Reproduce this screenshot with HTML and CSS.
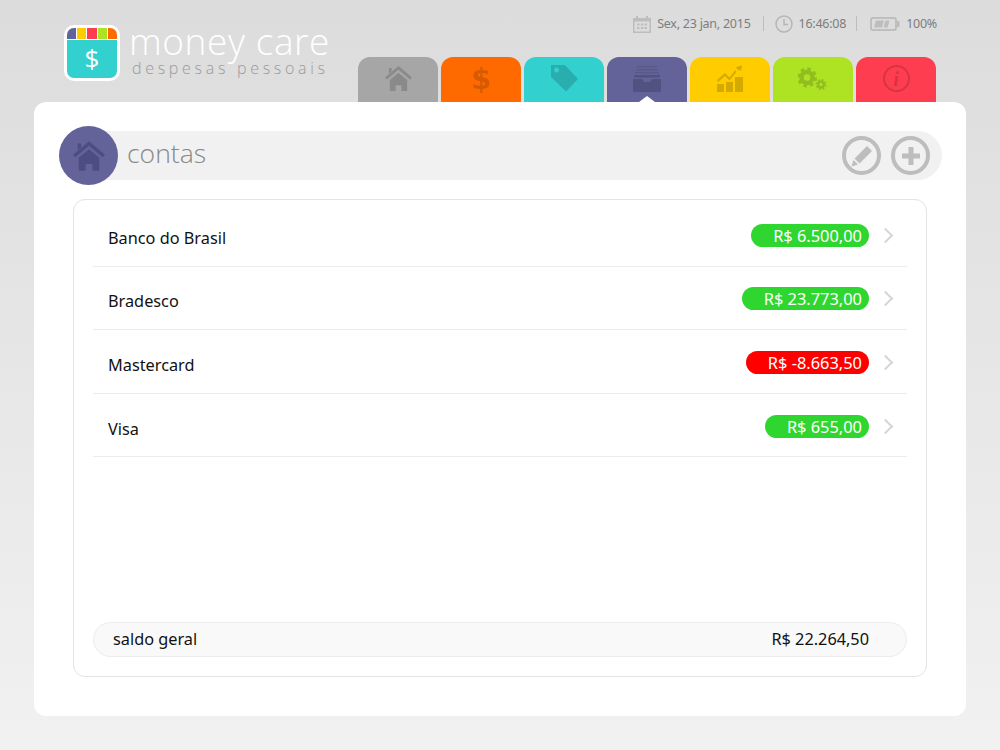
FILE: index.html
```html
<!DOCTYPE html>
<html lang="pt">
<head>
  <meta charset="utf-8">
  <title>money care</title>
  <link rel="stylesheet" href="styles.css">
</head>
<body>
  <header class="top">
    <div class="brand">
      <div class="app-icon">
        <div class="app-stripes">
          <span class="c-purple"></span><span class="c-yellow"></span><span class="c-red"></span><span class="c-green"></span><span class="c-orange"></span>
        </div>
        <div class="app-dollar">$</div>
      </div>
      <div class="brand-text">
        <div class="brand-name">money care</div>
        <div class="brand-sub">despesas pessoais</div>
      </div>
    </div>
    <div class="top-right">
      <div class="status">
        <svg class="st-icon" width="18" height="18" viewBox="0 0 18 18"><path fill="#bdbdbd" d="M0 3h3V1h2v2h8V1h2v2h3v15H0z"/><path fill="#dcdcdc" d="M1.500 6.500h15v10h-15z"/><path fill="#bdbdbd" d="M4 8.500h2.500v2H4zM7.800 8.500h2.500v2H7.800zM11.500 8.500H14v2h-2.500zM4 12h2.500v2H4zM7.800 12h2.500v2H7.800zM11.500 12H14v2h-2.500z"/></svg>
        <span>Sex, 23 jan, 2015</span>
        <i class="sep"></i>
        <svg class="st-icon" width="18" height="18" viewBox="0 0 18 18"><circle cx="9" cy="9" r="8" fill="none" stroke="#b5b5b5" stroke-width="1.500"/><path d="M9 4v5.500h4" fill="none" stroke="#b5b5b5" stroke-width="1.500"/></svg>
        <span>16:46:08</span>
        <i class="sep sep-b"></i>
        <svg class="st-icon" width="30" height="14" viewBox="0 0 30 14"><rect x="1" y="1" width="25" height="12" rx="1.500" fill="none" stroke="#b5b5b5" stroke-width="1.500"/><path fill="#bdbdbd" d="M27 4h2.500v6H27zM6 3.500h8l-2 7H4zM15.500 3.500h4l-2 7h-4z"/></svg>
        <span>100%</span>
      </div>
      <nav class="tabs">
        <a class="tab t-gray"><svg width="27" height="27" viewBox="0 0 28 28"><path d="M14 1 0 13l2 2L14 5l12 10 2-2zM4 3h3v3.500L4 9zM14 8 5 15.500V27h6v-6h6v6h6V15.500z"/></svg></a>
        <a class="tab t-orange"><span class="tab-dollar">$</span></a>
        <a class="tab t-teal"><svg width="27" height="27" viewBox="0 0 27 27"><path fill-rule="evenodd" d="M0 0h14l13 14-12 12.500L0 12zM5.500 2.500a2.500 2.500 0 1 0 .01 0z"/></svg></a>
        <a class="tab t-purple on"><svg width="28" height="28" viewBox="0 0 28 28"><path opacity=".6" d="M4 1h20v1.500H4zM3 4h22v1.500H3zM2 7h24v1.500H2z"/><path d="M1 10h26v2.500H1zM0 14h9l2 3h6l2-3h9v13H0z"/></svg></a>
        <a class="tab t-yellow"><svg width="28" height="28" viewBox="0 0 28 28"><path d="M1 19h7v8H1zM10 17h7v10h-7zM19 12h8v15h-8z"/><path d="m1 15 8-7 4.500 4.500 5.500-7 1.500 1.300-7 8.700L9 11l-7 6zM21 3.500 20 2l6-1.500L25 6l-1.500-1.500-1 1z"/></svg></a>
        <a class="tab t-green"><svg width="30" height="30" viewBox="0 0 30 30"><g fill="none" stroke="#000"><circle cx="9" cy="13.500" r="5.500" stroke-width="4.500"/><circle cx="9" cy="13.500" r="8.500" stroke-width="3" stroke-dasharray="3.500 3.180"/><circle cx="23" cy="20.500" r="2.800" stroke-width="2.200"/><circle cx="23" cy="20.500" r="4.600" stroke-width="1.800" stroke-dasharray="1.900 1.710"/></g></svg></a>
        <a class="tab t-red"><span class="tab-info">i</span></a>
      </nav>
    </div>
  </header>

  <main class="card">
    <div class="heading">
      <div class="heading-icon">
        <svg width="32" height="32" viewBox="0 0 28 28"><path d="M14 1 0 13l2 2L14 5l12 10 2-2zM4 3h3v3.500L4 9zM14 8 5 15.500V27h6v-6h6v6h6V15.500z"/></svg>
      </div>
      <div class="heading-bar">
        <h1>contas</h1>
        <div class="actions">
          <button class="round-btn"><svg width="24" height="24" viewBox="0 0 24 24"><path fill="#bdbdbd" d="M17 2l5 5L9.500 19.500l-5-5zM3.500 16l4.500 4.500L1.500 22.500z"/></svg></button>
          <button class="round-btn"><svg width="24" height="24" viewBox="0 0 24 24"><path fill="#bdbdbd" d="M9.500 3h5v6.500H21v5h-6.500V21h-5v-6.500H3v-5h6.500z"/></svg></button>
        </div>
      </div>
    </div>

    <section class="panel">
      <ul class="accounts">
        <li class="row"><span>Banco do Brasil</span><b class="pill pos">R$ 6.500,00</b><i class="chev"></i></li>
        <li class="row"><span>Bradesco</span><b class="pill pos">R$ 23.773,00</b><i class="chev"></i></li>
        <li class="row"><span>Mastercard</span><b class="pill neg">R$ -8.663,50</b><i class="chev"></i></li>
        <li class="row"><span>Visa</span><b class="pill pos">R$ 655,00</b><i class="chev"></i></li>
      </ul>
      <div class="total">
        <span>saldo geral</span>
        <span>R$ 22.264,50</span>
      </div>
    </section>
  </main>
</body>
</html>
```

FILE: styles.css
```css
* {
  box-sizing: border-box;
}

body {
  margin: 0;
  height: 750px;
  overflow: hidden;
  background: linear-gradient(#dcdcdc, #f1f1f1);
  font-family: "Noto Sans", "Open Sans", sans-serif;
  color: #111;
}

/* top area */
.top {
  display: flex;
  height: 102px;
  padding-left: 64px;
}

.brand {
  display: flex;
  width: 294px;
  padding-top: 25px;
  gap: 10px;
}

.app-icon {
  width: 56px;
  height: 56px;
  border: 3px solid #fff;
  border-radius: 10px;
  background: #33d0d0;
  overflow: hidden;
}

.app-stripes {
  display: flex;
  height: 12px;
  gap: 1px;
  background: #fff;
  border-bottom: 1px solid #fff;
}

.app-stripes span {
  flex: 1;
}

.c-purple { background: #63639a; }
.c-yellow { background: #ffcc00; }
.c-red { background: #ff3d50; }
.c-green { background: #aee324; }
.c-orange { background: #ff6a00; }

.app-dollar {
  color: #fff;
  font-family: "Open Sans", sans-serif;
  font-size: 26px;
  line-height: 37px;
  text-align: center;
}

.brand-text {
  margin-top: -4px;
  margin-left: -1px;
}

.brand-name {
  color: #fff;
  font-family: "Open Sans", sans-serif;
  font-weight: 300;
  font-size: 37px;
  line-height: 39px;
  letter-spacing: 0.6px;
  white-space: nowrap;
}

.brand-sub {
  padding-left: 3px;
  color: #9a9a9a;
  font-family: "Open Sans", sans-serif;
  font-weight: 300;
  font-size: 16px;
  line-height: 16px;
  letter-spacing: 3.700px;
  white-space: nowrap;
}

.top-right {
  display: flex;
  flex-direction: column;
  width: 578px;
}

.status {
  display: flex;
  align-items: center;
  justify-content: flex-end;
  height: 48px;
  margin-right: -1px;
  padding-bottom: 1px;
  color: #7d7d7d;
  font-size: 12.500px;
  letter-spacing: -0.25px;
}

.st-icon {
  margin-right: 6px;
}

.sep {
  width: 1px;
  height: 15px;
  margin: 0 11px 0 12px;
  background: #bdbdbd;
}

.sep-b {
  margin: 0 13px 0 10px;
}

.tabs {
  display: flex;
  gap: 3px;
  margin-top: 9px;
}

.tab {
  display: flex;
  position: relative;
  align-items: center;
  justify-content: center;
  width: 80px;
  height: 45px;
  padding-bottom: 2px;
  border-radius: 12px 12px 0 0;
}

.tab svg {
  fill: #000;
  opacity: 0.16;
}

.t-gray { background: #a6a6a6; }
.t-orange { background: #ff6a00; }
.t-teal { background: #33d0d0; }
.t-purple { background: #63639a; }
.t-yellow { background: #ffcc00; }
.t-green { background: #aee324; }
.t-red { background: #ff3d50; }

.tab.on::after {
  content: "";
  position: absolute;
  bottom: 0;
  left: 32px;
  border: 8px solid transparent;
  border-top: 0;
  border-bottom: 6px solid #fff;
}

.tab-dollar {
  color: rgba(0, 0, 0, 0.16);
  font-family: "DejaVu Sans", sans-serif;
  font-weight: bold;
  font-size: 29px;
  line-height: 34px;
}

.tab-info {
  width: 27px;
  height: 27px;
  border: 2px solid rgba(0, 0, 0, 0.16);
  border-radius: 50%;
  color: rgba(0, 0, 0, 0.16);
  font-family: "Liberation Serif", serif;
  font-weight: bold;
  font-style: italic;
  font-size: 22px;
  line-height: 23px;
  text-align: center;
}

/* main card */
.card {
  display: flex;
  flex-direction: column;
  height: 614px;
  margin: 0 34px;
  padding: 24px 24px 39px 25px;
  border-radius: 12px;
  background: #fff;
}

.heading {
  display: flex;
  align-items: center;
}

.heading-icon {
  display: flex;
  position: relative;
  align-items: center;
  justify-content: center;
  flex: none;
  width: 59px;
  height: 59px;
  border-radius: 50%;
  background: #63639a;
}

.heading-icon svg {
  fill: #4d4d83;
}

.heading-bar {
  display: flex;
  flex: 1;
  align-items: center;
  justify-content: space-between;
  height: 49px;
  margin-left: -30px;
  padding: 0 12px 0 39px;
  border-radius: 0 25px 25px 0;
  background: #f1f1f1;
}

.heading-bar h1 {
  margin: 0 0 6px;
  color: #888;
  font-family: "Open Sans", sans-serif;
  font-weight: 300;
  font-size: 26.500px;
  line-height: 34px;
}

.actions {
  display: flex;
  gap: 10px;
}

.round-btn {
  display: flex;
  align-items: center;
  justify-content: center;
  width: 39px;
  height: 39px;
  padding: 0;
  border: 4px solid #bdbdbd;
  border-radius: 50%;
  background: transparent;
}

.panel {
  display: flex;
  flex: 1;
  flex-direction: column;
  justify-content: space-between;
  margin: 14px 15px 0 14px;
  padding: 3px 19px 19px;
  border: 1px solid #e3e3e3;
  border-radius: 12px;
}

.accounts {
  margin: 0;
  padding: 0;
  list-style: none;
}

.row {
  display: flex;
  align-items: center;
  height: 63.600px;
  padding-top: 7px;
  padding-left: 15px;
  border-bottom: 1px solid #ececec;
  font-size: 16.300px;
}

.row span {
  flex: 1;
}

.pill {
  height: 23px;
  margin-top: -5px;
  padding: 0 7px 0 22px;
  border-radius: 12px;
  color: #fff;
  font-weight: 400;
  font-size: 16.400px;
  line-height: 23px;
}

.pos { background: #2fd62f; }
.neg { background: #ff0000; }

.chev {
  width: 11px;
  height: 11px;
  margin: -5px 16px 0 11px;
  border-top: 2px solid #d6d6d6;
  border-right: 2px solid #d6d6d6;
  transform: rotate(45deg);
}

.total {
  display: flex;
  align-items: center;
  justify-content: space-between;
  height: 35px;
  padding: 0 37px 1px 19px;
  border: 1px solid #ececec;
  border-radius: 18px;
  background: #f9f9f9;
  font-size: 16.300px;
}
```
